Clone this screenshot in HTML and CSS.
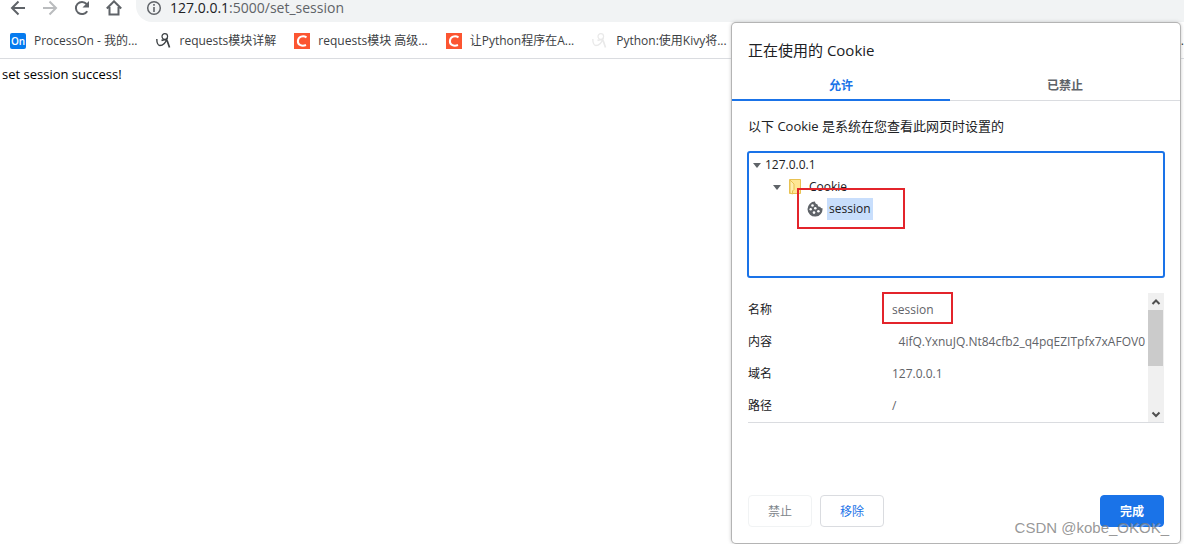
FILE: index.html
```html
<!DOCTYPE html>
<html lang="zh-CN">
<head>
<meta charset="utf-8">
<title>127.0.0.1:5000/set_session</title>
<link rel="stylesheet" href="styles.css">
</head>
<body>
<svg class="defs" aria-hidden="true">
  <symbol id="scribble" viewBox="0 0 16 16"><g fill="none" stroke="currentColor"><circle cx="8.800" cy="3.500" r="2.800" stroke-width="1.200"/><path d="M.8 6c0 3.500 1.200 6.500 3 6.500 3 0 6.500-3 7.500-7.500" stroke-width="1.400"/><path d="M5.500 7.500c2.500-1.200 5-.8 5.700.500.9 1.800 1.300 4 2.300 6.500" stroke-width="1.700"/></g></symbol>
  <symbol id="c-logo" viewBox="0 0 16 16"><path fill="#fc5531" d="M0 0h16v16H0z"/><path d="M12.500 4.300C9 2.200 4.200 3.500 3.900 8c-.2 4.200 4.100 5.500 8.100 4" fill="none" stroke="#fff" stroke-width="2"/></symbol>
  <symbol id="arrow" viewBox="0 0 16 16"><path d="M15 8H2M8.500 1.500 2 8l6.500 6.500" fill="none" stroke="currentColor" stroke-width="2"/></symbol>
</svg>
<header class="toolbar">
  <nav class="nav">
    <button aria-label="后退"><svg><use href="#arrow"/></svg></button>
    <button class="faded" aria-label="前进"><svg class="flip"><use href="#arrow"/></svg></button>
    <button aria-label="重新加载"><svg viewBox="0 0 16 16"><path d="M13.200 11.200A6.100 6.100 0 1 1 12.600 4" fill="none" stroke="currentColor" stroke-width="2"/><path d="M15 1v6.500H8.500z" fill="currentColor"/></svg></button>
    <button aria-label="主页"><svg viewBox="0 0 16 16"><path d="M.8 8.500 8 1.300l7.200 7.200M3.500 7v7.500h9V7" fill="none" stroke="currentColor" stroke-width="2"/></svg></button>
  </nav>
  <div class="address">
    <svg class="info" viewBox="0 0 16 16"><circle cx="8" cy="8" r="6.300" fill="none" stroke="currentColor" stroke-width="1.500"/><path d="M7.200 4h1.600v1.700H7.200zM7.200 7h1.600v5H7.200z" fill="currentColor"/></svg>
    <span><span class="host">127.0.0.1</span>:5000/set_session</span>
  </div>
</header>
<nav class="bookmarks">
  <a href="#"><span class="on-logo">On</span>ProcessOn - 我的...</a>
  <a href="#"><svg><use href="#scribble"/></svg>requests模块详解</a>
  <a href="#"><svg><use href="#c-logo"/></svg>requests模块 高级...</a>
  <a href="#"><svg><use href="#c-logo"/></svg>让Python程序在A...</a>
  <a href="#"><svg class="pale"><use href="#scribble"/></svg>Python:使用Kivy将...</a>
  <span class="more">.</span>
</nav>
<main class="page">set session success!</main>

<section class="dialog" role="dialog" aria-labelledby="title">
  <h1 id="title">正在使用的 Cookie</h1>
  <div class="tabs" role="tablist">
    <button class="tab active" role="tab" aria-selected="true">允许</button>
    <button class="tab" role="tab" aria-selected="false">已禁止</button>
  </div>
  <div class="content">
    <p class="intro">以下 Cookie 是系统在您查看此网页时设置的</p>
    <div class="tree" role="tree">
      <div class="node" role="treeitem"><i class="caret"></i><span>127.0.0.1</span></div>
      <div class="node level2" role="treeitem"><i class="caret"></i>
        <svg class="folder" viewBox="0 0 12 16"><path d="M.5.500h11v14H.5z" fill="#ffe694" stroke="#e8c252"/><path d="M1 1l4 4v5.500L3.500 12v3L1 14z" fill="#ffeeb0" stroke="#e8c252"/></svg>
        <span>Cookie</span></div>
      <div class="node level3" role="treeitem" aria-selected="true">
        <svg class="cookie" viewBox="0 0 16 16"><path d="M8 .6c.1 1.800 1 2.700 2.600 2.800.1 1.600 1.100 2.500 2.600 2.300.4 1.100 1.200 1.500 2.300 1.600A7.500 7.500 0 1 1 8 .6z" fill="#5f6368"/><g fill="#fff"><circle cx="5.500" cy="4.500" r="1.300"/><circle cx="3.700" cy="8.300" r="1.200"/><circle cx="8.300" cy="7.300" r="1.300"/><circle cx="7" cy="11.600" r="1.300"/><circle cx="11.400" cy="10.300" r="1.300"/></g></svg>
        <span class="selected">session</span></div>
      <span class="mark mark-tree"></span>
    </div>
    <div class="details">
      <dl>
        <dt>名称</dt><dd><span>session</span><span class="mark mark-name"></span></dd>
        <dt>内容</dt><dd class="clip"><span>4ifQ.YxnuJQ.Nt84cfb2_q4pqEZITpfx7xAFOV0</span></dd>
        <dt>域名</dt><dd>127.0.0.1</dd>
        <dt>路径</dt><dd>/</dd>
      </dl>
      <div class="scrollbar">
        <button aria-label="向上滚动"><svg viewBox="0 0 16 16"><path d="m4.500 10 3.500-3.500 3.500 3.500" fill="none" stroke="currentColor" stroke-width="2"/></svg></button>
        <div class="track"><div class="thumb"></div></div>
        <button aria-label="向下滚动"><svg viewBox="0 0 16 16"><path d="m4.500 6.500 3.500 3.500 3.500-3.500" fill="none" stroke="currentColor" stroke-width="2"/></svg></button>
      </div>
    </div>
    <footer>
      <button class="btn" disabled>禁止</button>
      <button class="btn">移除</button>
      <button class="btn primary">完成</button>
    </footer>
  </div>
  <span class="watermark">CSDN @kobe_OKOK_</span>
</section>
</body>
</html>
```
FILE: styles.css
```css
* { box-sizing: border-box; }
body {
  margin: 0;
  min-height: 100vh;
  position: relative;
  overflow: hidden;
  background: #fff;
  color: #202124;
  font: 12px/16px "Open Sans", "Noto Sans CJK SC", sans-serif;
}
button { font: inherit; color: inherit; border: 0; padding: 0; background: none; }
svg { width: 16px; height: 16px; display: block; flex: none; }
.defs { position: absolute; width: 0; height: 0; }

.toolbar { display: flex; height: 22px; align-items: flex-start; }
.nav { display: flex; gap: 16px; padding-left: 10px; width: 136px; flex: none; color: #5f6368; }
.faded { color: #babcbe; }
.flip { transform: scaleX(-1); }
.address {
  flex: 1;
  height: 22px;
  display: flex;
  gap: 8px;
  padding-left: 10px;
  background: #f1f3f4;
  border-bottom-left-radius: 16px;
  color: #5f6368;
  font-size: 14px;
}
.host { color: #202124; }

.bookmarks {
  display: flex;
  align-items: center;
  height: 37px;
  padding: 1px 0 0 10px;
  border-bottom: 1px solid #dadce0;
  gap: 18px;
}
.bookmarks a {
  display: flex;
  align-items: center;
  gap: 8px;
  color: #3c4043;
  text-decoration: none;
  white-space: nowrap;
}
.on-logo {
  width: 16px;
  height: 16px;
  border-radius: 2px;
  background: #067bef;
  color: #fff;
  font-size: 10px;
  font-weight: 600;
  text-align: center;
}
.pale { color: #e9e9e9; }
.more { margin-left: auto; }
.page { padding: 7px 2px; font-size: 13px; color: #000; }

.dialog {
  position: absolute;
  top: 23px;
  right: 4px;
  bottom: 1px;
  width: 448px;
  display: flex;
  flex-direction: column;
  background: #fff;
  border-radius: 4px;
  box-shadow: 0 0 0 1px #b4b4b4, 0 0 4px #aaa;
}
h1 { margin: 0; padding: 15px 16px 0; font-size: 15px; line-height: 24px; font-weight: 400; }
.tabs { display: flex; margin-top: 7px; border-bottom: 1px solid #dadce0; }
.tab {
  flex: 1;
  height: 32px;
  margin-bottom: -1px;
  padding-top: 4px;
  border-bottom: 2px solid transparent;
  font-weight: 600;
  color: #5f6368;
}
.tab.active { flex: 0 0 218px; color: #1a73e8; border-color: #1a73e8; }
.content { flex: 1; display: flex; flex-direction: column; padding: 16px; }
.intro { margin: 0 0 16px; font-size: 13px; line-height: 18px; }
.tree {
  position: relative;
  height: 127px;
  margin: 0 -1px;
  padding: 1px 4px;
  border: 2px solid #1a73e8;
  border-radius: 3px;
}
.node { display: flex; align-items: center; height: 22px; gap: 4px; }
.level2 { padding-left: 20px; gap: 8px; }
.level3 { padding-left: 54px; }
.selected { padding: 3px 2px; background: #c8defc; }
.caret { border: 4px solid transparent; border-top: 5px solid #5f6368; border-bottom: 0; }
.folder { width: 12px; }
.mark { position: absolute; border: 2px solid #e3242b; }
.mark-tree { left: 48px; top: 35px; width: 108px; height: 41px; }
.details { display: flex; margin-top: 15px; height: 130px; border-bottom: 1px solid #dadce0; }
dl {
  flex: 1;
  min-width: 0;
  margin: 0;
  display: grid;
  grid-template-columns: 144px 1fr;
  grid-auto-rows: 32px;
  align-items: center;
  padding: 1px 3px 0 0;
}
dd { margin: 0; position: relative; min-width: 0; color: #5f6368; }
.clip { display: flex; justify-content: flex-end; overflow: hidden; }
.mark-name { left: -10px; top: -10px; width: 71px; height: 32px; }
.scrollbar { width: 16px; display: flex; flex-direction: column; background: #f0f0f0; color: #505050; }
.scrollbar button { height: 17px; }
.track { flex: 1; }
.thumb { width: 15px; height: 56px; background: #cbcbcb; }
footer { display: flex; gap: 8px; margin-top: auto; }
.btn {
  width: 64px;
  height: 32px;
  padding-top: 2px;
  border: 1px solid #dadce0;
  border-radius: 4px;
  color: #1a73e8;
}
.btn:disabled { color: #80868b; border-color: #f1f3f4; }
.btn.primary { margin-left: auto; color: #fff; background: #1a73e8; border-color: #1a73e8; font-weight: 600; }
.watermark {
  position: absolute;
  right: 11px;
  bottom: 5px;
  font: 15px/20px "Liberation Sans", sans-serif;
  color: rgba(125, 125, 125, 0.8);
  text-shadow: 1px 1px 0 rgba(255, 255, 255, 0.4);
}
```
